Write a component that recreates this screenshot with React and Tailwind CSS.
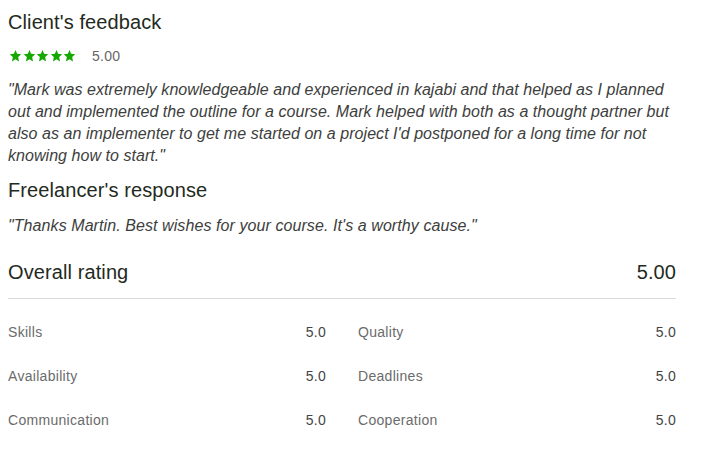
export default function App() {
  const Star = () => (
    <svg width="13" height="12" viewBox="0 0 24 23" fill="#14a800">
      <path d="M12 0l3.09 7.26L23 8.27l-5.9 5.34L18.7 22 12 17.77 5.3 22l1.6-8.39L1 8.27l7.91-1.01z" />
    </svg>
  );
  const rows = [
    ["Skills", "5.0", "Quality", "5.0"],
    ["Availability", "5.0", "Deadlines", "5.0"],
    ["Communication", "5.0", "Cooperation", "5.0"],
  ];
  return (
    <div className="w-[705px] h-[460px] bg-white px-2 pt-[9px] font-['Liberation_Sans',Arial,sans-serif]">
      <div className="w-[668px]">
        <h2 className="text-[20px] leading-[26px] tracking-[0.1px] text-[#1f2a22]">Client's feedback</h2>
        <div className="flex items-center mt-[13px] h-[16px]">
          <div className="flex gap-[0.5px] ml-[1px]">
            <Star /><Star /><Star /><Star /><Star />
          </div>
          <span className="ml-[16px] text-[14px] tracking-[0.3px] text-[#676767]">5.00</span>
        </div>
        <p className="mt-[15px] text-[16px] leading-[22px] tracking-[0.05px] italic text-[#3d403d] whitespace-nowrap">
          "Mark was extremely knowledgeable and experienced in kajabi and that helped as I planned
          <br />
          out and implemented the outline for a course. Mark helped with both as a thought partner but
          <br />
          also as an implementer to get me started on a project I'd postponed for a long time for not
          <br />
          knowing how to start."
        </p>
        <h2 className="mt-[10px] text-[20px] leading-[26px] tracking-[0.1px] text-[#1f2a22]">Freelancer's response</h2>
        <p className="mt-[12px] text-[16px] leading-[22px] tracking-[0.08px] italic text-[#3d403d]">
          "Thanks Martin. Best wishes for your course. It's a worthy cause."
        </p>
        <div className="mt-[22px] flex justify-between items-center h-[26px]">
          <span className="text-[20px] tracking-[0.1px] text-[#1f2a22]">Overall rating</span>
          <span className="text-[20px] tracking-[0.1px] text-[#1f2a22]">5.00</span>
        </div>
        <div className="mt-[13px] border-t border-[#dcdcdc]" />
        <div className="mt-[23px] flex flex-col gap-[24px]">
          {rows.map((r) => (
            <div key={r[0]} className="grid grid-cols-2 gap-8 h-[20px] items-center text-[14px] tracking-[0.3px]">
              <div className="flex justify-between">
                <span className="text-[#6b6b6b]">{r[0]}</span>
                <span className="text-[#444444]">{r[1]}</span>
              </div>
              <div className="flex justify-between">
                <span className="text-[#6b6b6b]">{r[2]}</span>
                <span className="text-[#444444]">{r[3]}</span>
              </div>
            </div>
          ))}
        </div>
      </div>
    </div>
  );
}
